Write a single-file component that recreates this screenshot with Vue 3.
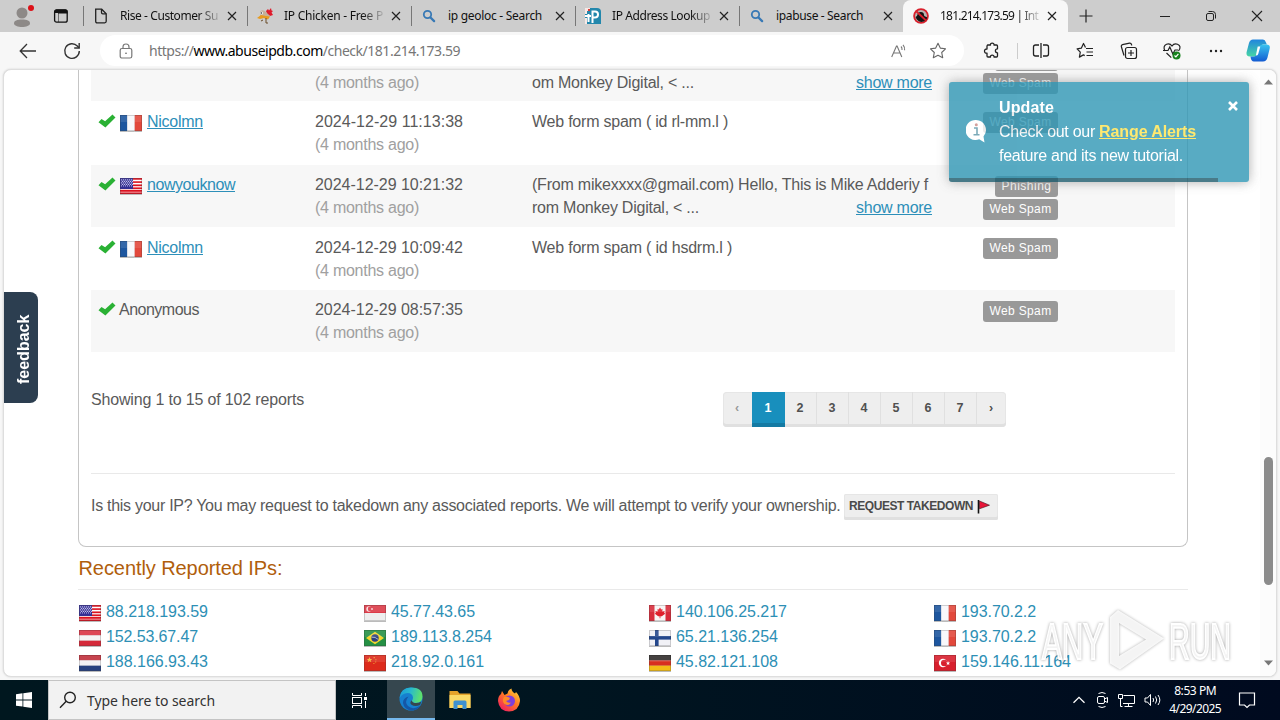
<script setup>
const vFit = {
  mounted(el, { value }) {
    if (!value) return
    const natural = el.getBoundingClientRect().width
    const count = el.textContent.length
    el.style.letterSpacing = `${(value - natural) / count}px`
  }
}

const tabs = [
  { icon: 'page', title: 'Rise - Customer Su', w: 98 },
  { icon: 'chicken', title: 'IP Chicken - Free P', w: 99 },
  { icon: 'search', title: 'ip geoloc - Search', w: 94 },
  { icon: 'ip', title: 'IP Address Lookup', w: 98 },
  { icon: 'search', title: 'ipabuse - Search', w: 87 },
  { icon: 'ban', title: '181.214.173.59 | Int', w: 98, active: true }
]

const reports = [
  { height: 31, partial: true, time: '', lines: [['om Monkey Digital, < ...', 162]], more: true, tags: ['Phishing', 'Web Spam'] },
  { height: 64, pad: 9, user: 'Nicolmn', uw: 56, flag: 'fr', time: '2024-12-29 11:13:38', lines: [['Web form spam ( id rl-mm.l )', 196]], tags: ['Web Spam'] },
  { height: 62, pad: 8, user: 'nowyouknow', uw: 88, flag: 'us', time: '2024-12-29 10:21:32', lines: [['(From mikexxxx@gmail.com) Hello, This is Mike Adderiy f', 396], ['rom Monkey Digital, < ...', 167]], more: true, tags: ['Phishing', 'Web Spam'] },
  { height: 63, pad: 9, user: 'Nicolmn', uw: 56, flag: 'fr', time: '2024-12-29 10:09:42', lines: [['Web form spam ( id hsdrm.l )', 200]], tags: ['Web Spam'] },
  { height: 62, pad: 8, user: 'Anonymous', uw: 80, plain: true, time: '2024-12-29 08:57:35', lines: [], tags: ['Web Spam'] }
]

const ips = [
  ['us', '88.218.193.59', 102], ['sg', '45.77.43.65', 84], ['ca', '140.106.25.217', 111], ['fr', '193.70.2.2', 75],
  ['at', '152.53.67.47', 92], ['br', '189.113.8.254', 101], ['fi', '65.21.136.254', 102], ['fr', '193.70.2.2', 75],
  ['nl', '188.166.93.43', 102], ['cn', '218.92.0.161', 93], ['de', '45.82.121.108', 102], ['tr', '159.146.11.164', 110]
]

const rect = (x, y, w, h, f) => `<rect x="${x}" y="${y}" width="${w}" height="${h}" fill="${f}"/>`
const rows3 = (a, b, c) => rect(0, 0, 22, 5.4, a) + rect(0, 5.4, 22, 5.3, b) + rect(0, 10.7, 22, 5.3, c)
const dots = Array.from({ length: 18 }, (_, i) => rect(1 + (i % 6) * 2, 1.4 + Math.floor(i / 6) * 3, 1, 1, '#c5c3ee')).join('')
const dots2 = Array.from({ length: 12 }, (_, i) => rect(2 + (i % 6) * 2, 2.9 + Math.floor(i / 6) * 3, 1, 1, '#c5c3ee')).join('')
const flags = {
  fr: rect(0, 0, 7.3, 16, '#1d569f') + rect(7.3, 0, 7.4, 16, '#f8f8fb') + rect(14.7, 0, 7.3, 16, '#e2483c'),
  us: rect(0, 0, 22, 16, '#fff') + [0, 3.2, 6.4, 9.4, 12, 14.4].map(y => rect(0, y, 22, 1.8, '#dc1220')).join('') + rect(0, 0, 13, 11, '#352f94') + dots + dots2,
  sg: rect(0, 0, 22, 8, '#dc3a48') + rect(0, 8, 22, 8, '#eeeeee') + '<circle cx="5" cy="4" r="2.7" fill="#fbdfe0"/><circle cx="6.2" cy="4" r="2.4" fill="#dc3a48"/><circle cx="8" cy="4" r="1" fill="#f7c9cc"/>',
  ca: rect(0, 0, 22, 16, '#f8f5f5') + rect(0, 0, 5.5, 16, '#d82c3b') + rect(16.5, 0, 5.5, 16, '#d82c3b') + '<path d="M11 2.6l1.3 2 1.2-.6-.2 2.6 2.4-.5-.5 1.6 1 1-3.4 2.6H9.200L5.800 8.700l1-1-.5-1.600 2.400.5L8.500 4l1.200.6z" fill="#e0202c"/><path d="M10.600 11h.8v2.300h-.8z" fill="#e0202c"/>',
  at: rows3('#db3142', '#f5f2f3', '#d42a3a'),
  nl: rows3('#c02f3c', '#f2f1f4', '#27417f'),
  de: rows3('#302c2b', '#d8301f', '#f3bd16'),
  fi: rect(0, 0, 22, 16, '#f1f1f6') + rect(6, 0, 3.6, 16, '#24478c') + rect(0, 6, 22, 3.6, '#24478c'),
  br: rect(0, 0, 22, 16, '#259044') + '<path d="M11 1.800L20 8l-9 6.200L2 8z" fill="#f3d52d"/><circle cx="11" cy="8" r="3.700" fill="#2d3f7e"/><path d="M7.600 7.200q3.600-.6 6.600 2.200" stroke="#cdd5dd" stroke-width=".8" fill="none"/>',
  cn: rect(0, 0, 22, 16, '#dd2a1b') + '<path d="M5.500 2l.8 2h2L6.700 5.300l.6 2-1.800-1.200-1.800 1.200.6-2L2.700 4h2z" fill="#f6b43a"/><path d="M9.600 2h1.200v1.200H9.600zm1.800 2.200h1v1h-1zm-.2 2.400h1v1h-1zM9.400 8h1v1h-1z" fill="#f0a036"/>',
  tr: rect(0, 0, 22, 16, '#d81f2d') + '<circle cx="9" cy="8" r="4.200" fill="#fff"/><circle cx="10.300" cy="8" r="3.300" fill="#d81f2d"/><path d="M14 6l.6 1.400 1.500.1-1.100 1 .4 1.500-1.400-.8-1.300.8.400-1.500-1.100-1 1.500-.1z" fill="#fff"/>'
}
const gloss = rect(0.5, 0.5, 21, 6.5, 'rgba(255,255,255,.1)') + '<rect x=".5" y=".5" width="21" height="15" fill="none" stroke="rgba(60,60,60,.22)"/>'
const flagArt = code => flags[code] + gloss
</script>

<template>
  <div class="desktop">
    <header class="tabstrip">
      <div class="profile">
        <svg width="26" height="28" viewBox="0 0 26 28">
          <circle cx="10" cy="13" r="5.500" fill="#8d8987" />
          <path d="M2 23.500c0-3 3-4 8-4s8 1 8 4c0 2.300-4 3.500-8 3.500s-8-1.200-8-3.500z" fill="#8d8987" />
          <circle cx="19" cy="8" r="3" fill="#dc1118" />
        </svg>
      </div>
      <svg class="tabmenu" width="16" height="16" viewBox="0 0 16 16">
        <rect x="1.600" y="1.900" width="12.600" height="12.300" rx="2" fill="none" stroke="#111" stroke-width="1.300" />
        <path d="M1.500 4V3q0-1.500 2-1.500h9q2 0 2 1.500v2.500h-9V14H5V5H2z" fill="#111" />
      </svg>
      <div v-for="(t, i) in tabs" :key="i" class="tab" :class="{ active: t.active }">
        <svg class="favicon" width="16" height="16" viewBox="0 0 16 16">
          <g v-if="t.icon === 'page'" fill="none" stroke="#222" stroke-width="1.300">
            <path d="M2.700 1.200h6l4.500 4.500v7.600q0 1.500-1.500 1.500h-7.500q-1.500 0-1.500-1.500z" /><path d="M8.500 1.200v3.300q0 1.300 1.300 1.300h3.300" />
          </g>
          <g v-else-if="t.icon === 'chicken'">
            <path d="M9 3l2-2 1 1.500L14 0l.5 2.500L16 3l-1.500 1.500L16 7l-3 1-3-2z" fill="#df1b2b" />
            <path d="M3 3.500Q6 1 9 4l4 4q-1 3-4 3.500L6 9 3 8z" fill="#c5b19b" />
            <path d="M0 10l4-3 5 1 4 .5-2 3-4-1.500-4 1z" fill="#e79b20" /><path d="M9 10v5h2M6 12l-2 1" stroke="#6b4c28" fill="none" />
            <circle cx="4.500" cy="5" r="1.500" fill="#eee" /><circle cx="4.300" cy="5" r=".7" fill="#222" />
          </g>
          <g v-else-if="t.icon === 'search'" fill="none" stroke="#3879b5">
            <circle cx="6.500" cy="6.500" r="3.700" stroke-width="1.800" /><path d="M9.500 9.500l3.600 3.600" stroke-width="2.300" stroke-linecap="round" />
          </g>
          <g v-else-if="t.icon === 'ip'">
            <path d="M0 0h12q4 0 4 4v12H0z" fill="#2387ac" /><path d="M0 0h5v3H2v3H0zM0 10h2v6H0z" fill="#f8e8e5" />
            <path d="M3.500 6v8M7.500 15V3.500H10q3 0 3 3t-3 3H7.500M0 8h6" fill="none" stroke="#fff" stroke-width="2" /><path d="M3 1h2v2H3z" fill="#dc3c37" />
          </g>
          <g v-else>
            <circle cx="8" cy="8" r="7.800" fill="#d9202c" /><circle cx="8" cy="8" r="6" fill="#b9b4b2" />
            <path d="M2.500 9q2-1 2.500-4 3-2 5.500 0l.8 3 3 1.500q-1 4-6 4.500-4-.5-5.800-5z" fill="#151313" /><path d="M3.500 3.500l9.500 9" stroke="#d9202c" stroke-width="1.800" />
          </g>
        </svg>
        <div class="tabtitle" :class="{ fade: t.w > 95 }"><span v-fit="t.w">{{ t.title }}</span></div>
        <svg class="tabclose" width="10" height="10" viewBox="0 0 10 10"><path d="M1 1l8 8M9 1L1 9" stroke="#222" stroke-width="1.200" /></svg>
      </div>
      <svg class="newtab" width="14" height="14" viewBox="0 0 14 14"><path d="M7 .5v13M.5 7h13" stroke="#222" stroke-width="1.200" /></svg>
      <div class="winbtns">
        <svg width="12" height="12" viewBox="0 0 12 12"><path d="M1 6.500h10" stroke="#222" /></svg>
        <svg width="12" height="12" viewBox="0 0 12 12" fill="none" stroke="#222"><rect x="1.500" y="3.500" width="7" height="7" rx="1.500" /><path d="M3.500 1.500h4q3 0 3 3v4" /></svg>
        <svg width="12" height="12" viewBox="0 0 12 12"><path d="M1 1l10 10M11 1L1 11" stroke="#222" stroke-width="1.100" /></svg>
      </div>
    </header>

    <div class="toolbar">
      <svg class="back" width="18" height="16" viewBox="0 0 18 16" fill="none" stroke="#333" stroke-width="1.300"><path d="M17 8H1.500M8 1L1.200 8 8 15" /></svg>
      <svg class="reload" width="18" height="18" viewBox="0 0 18 18" fill="none" stroke="#333" stroke-width="1.400"><path d="M16.300 9a7.300 7.300 0 1 1-2-5l1.700 1.800" /><path d="M16.200 1v5h-5" /></svg>
      <div class="address">
        <svg class="lock" width="14" height="16" viewBox="0 0 14 16" fill="none" stroke="#777" stroke-width="1.200"><rect x="1.200" y="5.500" width="11.600" height="9.500" rx="1.800" /><path d="M4 5.500V4q0-3 3-3t3 3v1.500" /><circle cx="7" cy="10.200" r=".8" fill="#555" stroke="none" /></svg>
        <span v-fit="311" class="url">https://<b>www.abuseipdb.com</b>/check/181.214.173.59</span>
        <svg class="read" width="16" height="16" viewBox="0 0 16 16" fill="none" stroke="#777" stroke-width="1.100"><path d="M.7 14L5.500 3h.6l4.700 11M2.500 10h6.600M10 3.500q1.300 1.300 1 3.500M12 1.800q2 2.200 1.600 5.500" /></svg>
        <svg class="star" width="18" height="17" viewBox="0 0 18 17" fill="none" stroke="#666" stroke-width="1.100" stroke-linejoin="round"><path d="M9 1.200l2.300 4.900 5.200.7-3.800 3.700 1 5.200L9 13.200l-4.700 2.500 1-5.200L1.500 6.800l5.200-.7z" /></svg>
      </div>
      <div class="tools">
        <svg width="18" height="18" viewBox="0 0 18 18" fill="none" stroke="#222" stroke-width="1.300" stroke-linejoin="round"><path d="M4.500 3h3q-.3-1.900 1.700-1.900T11 3h2.500q1 0 1 1v2.800q-2.100 0-2.100 2t2.100 2V14q0 1-1 1H11q.1-1.900-1.800-1.900T7.500 15h-2.500q-1 0-1-1v-2.900q-2.500.2-2.500-2T4 7V4z" /></svg>
        <i class="divider"></i>
        <svg width="18" height="18" viewBox="0 0 18 18" fill="none" stroke="#222" stroke-width="1.300"><path d="M7 3H3.500Q1.500 3 1.500 5v7q0 2 2 2H7M11 3h3.500q2 0 2 2v7q0 2-2 2H11M9 1v15" /></svg>
        <svg width="18" height="18" viewBox="0 0 18 18" fill="none" stroke="#222" stroke-width="1.200" stroke-linejoin="round"><path d="M9.500 5.500L7.500 1.500 5.300 6.200l-4.200.6 3.200 3.300-.9 5 4-2.200 1.300.7M10 6.500h7M10.500 10H17M10.500 13.500H17" /></svg>
        <svg width="18" height="18" viewBox="0 0 18 18" fill="none" stroke="#222" stroke-width="1.200"><rect x="5.500" y="5.500" width="11" height="11" rx="2" /><path d="M11 8v6M8 11h6M4 13.500L1.300 4.500Q1 3 2.500 2.600l7-1.500q1.600-.2 2 1.400l.2 1" /></svg>
        <svg width="19" height="18" viewBox="0 0 19 18" fill="none" stroke="#222" stroke-width="1.200"><path d="M2 9Q-.5 4 3.500 2.200 7 1 9 4q2-3 5.500-1.800Q19 4 15.500 9M3.500 11l4.800 4.600M0 8.500h5L6.800 5l3 7L12 8h3" /><circle cx="13.500" cy="13.500" r="4" fill="#16821c" stroke="none" /><path d="M11.500 13.500l1.400 1.400 2.500-3" stroke="#fff" /></svg>
        <svg width="18" height="18" viewBox="0 0 18 18" fill="#222"><circle cx="3" cy="9" r="1.200" /><circle cx="8" cy="9" r="1.200" /><circle cx="13" cy="9" r="1.200" /></svg>
        <svg class="copilot" width="24" height="23" viewBox="0 0 24 23">
          <defs><linearGradient id="cpa" x1="0" y1="0" x2="0" y2="1"><stop stop-color="#2185de" /><stop offset="1" stop-color="#46d6a5" /></linearGradient><linearGradient id="cpb" x1="0" y1="0" x2="0" y2="1"><stop stop-color="#39c4ef" /><stop offset="1" stop-color="#135bd2" /></linearGradient></defs>
          <path d="M7 .5h10q2 0 3 3l.8 2H17q-2 0-3 3l-2 6q-1 3-4 3H4q-4 0-3.500-4L3 4Q4 .5 7 .5z" fill="url(#cpa)" />
          <path d="M17 5.500h3.500q4 0 3.200 4l-2.200 9q-1 4-4.500 4H8q-3 0-3.500-5H8q2 0 3-3l2-6q1-3 4-3z" fill="url(#cpb)" />
          <path d="M11.700 7.500h2.600L12.200 15q-.5 1.500-2.300 1.500z" fill="#fff" />
        </svg>
      </div>
    </div>

    <main class="viewport">
      <div class="page">
        <section class="card">
          <div v-for="(r, i) in reports" :key="i" class="row" :class="{ odd: i % 2 === 0, partial: r.partial }" :style="{ height: r.height + 'px', paddingTop: (r.pad || 0) + 'px' }">
            <div class="who">
              <template v-if="r.user">
                <svg class="check" width="18" height="14" viewBox="0 0 18 14"><path d="M.5 8.200l3-3.200 3.600 2.300L14.500.6l3 2.900L7.400 13.400z" fill="#2ab134" /></svg>
                <svg v-if="r.flag" class="flag" width="22" height="16" viewBox="0 0 22 16" v-html="flagArt(r.flag)"></svg>
                <span v-fit="r.uw" :class="r.plain ? 'plain' : 'link'">{{ r.user }}</span>
              </template>
            </div>
            <div class="when">
              <div v-if="r.time"><span v-fit="148">{{ r.time }}</span></div>
              <div class="ago"><span v-fit="104">(4 months ago)</span></div>
            </div>
            <div class="comment">
              <div v-for="(l, k) in r.lines" :key="k" class="cline">
                <span v-fit="l[1]">{{ l[0] }}</span>
                <span v-if="r.more && k === r.lines.length - 1" v-fit="76" class="link">show more</span>
              </div>
            </div>
            <div class="tags" :class="{ raised: r.pad === 9 }">
              <div v-for="t in r.tags" :key="t" class="tag"><span v-fit="t === 'Phishing' ? 50 : 62">{{ t }}</span></div>
            </div>
          </div>
          <div class="summary">
            <span v-fit="213" class="showing">Showing 1 to 15 of 102 reports</span>
            <div class="pager">
              <span class="pg dim">‹</span>
              <span class="pg on">1</span>
              <span v-for="n in 6" :key="n" class="pg">{{ n + 1 }}</span>
              <span class="pg last">›</span>
            </div>
          </div>
          <div class="takedown">
            <span v-fit="749.5">Is this your IP? You may request to takedown any associated reports. We will attempt to verify your ownership.</span>
            <div class="request">
              <span v-fit="124">REQUEST TAKEDOWN</span>
              <svg width="14" height="15" viewBox="0 0 14 15"><path d="M1.500 1v13.500" stroke="#111" stroke-width="1.600" /><path d="M2.500 2l10 4.200-10 3.600z" fill="#e81538" stroke="#3b1018" stroke-width=".6" /></svg>
            </div>
          </div>
        </section>
        <h3 class="heading"><span v-fit="204">Recently Reported IPs:</span></h3>
        <div class="ips">
          <div v-for="(p, i) in ips" :key="i" class="ip">
            <svg class="flag" width="22" height="16" viewBox="0 0 22 16" v-html="flagArt(p[0])"></svg>
            <span v-fit="p[2]">{{ p[1] }}</span>
          </div>
        </div>
      </div>
      <div class="scroll">
        <svg width="9" height="6" viewBox="0 0 9 6"><path d="M0 5.500L4.500.5 9 5.500z" fill="#777" /></svg>
        <div class="thumb"></div>
        <svg class="down" width="9" height="6" viewBox="0 0 9 6"><path d="M0 .5L4.500 5.500 9 .5z" fill="#777" /></svg>
      </div>
      <div class="feedback">feedback</div>
      <div class="toast">
        <svg class="info" width="21" height="26" viewBox="0 0 21 26"><path d="M10 1a10 10 0 0 1 7.500 16.500l1 6-5.300-3.200A10 10 0 1 1 10 1z" fill="#fff" /><circle cx="10.300" cy="5.800" r="1.500" fill="#c98983" /><path d="M8 9h3v6.500M7.500 15.800h6" stroke="#5b96a8" stroke-width="1.600" fill="none" /></svg>
        <div class="tmsg">
          <div><b v-fit="55">Update</b></div>
          <div><span v-fit="96" class="pre">Check out our</span><b v-fit="97" class="alerts">Range Alerts</b></div>
          <div><span v-fit="184">feature and its new tutorial.</span></div>
        </div>
        <svg class="tclose" width="10" height="10" viewBox="0 0 10 10"><path d="M1 1l8 8M9 1L1 9" stroke="#fff" stroke-width="2.600" /></svg>
        <div class="progress"></div>
      </div>
    </main>

    <svg class="watermark" width="204" height="68" viewBox="0 0 204 68">
      <g fill="#fff" fill-opacity=".85" stroke="#fff" stroke-width="2">
        <text x="4" y="53" textLength="61" lengthAdjust="spacingAndGlyphs">ANY</text>
        <text x="131" y="53" textLength="62" lengthAdjust="spacingAndGlyphs">RUN</text>
        <path stroke="none" fill-rule="evenodd" d="M72 11l8-7 46 28.500-44 31-10-6zm9 6v33l27-16.500z" />
      </g>
    </svg>

    <footer class="taskbar">
      <div class="start"><svg width="16" height="16" viewBox="0 0 16 16" fill="#fff"><path d="M0 2.200l6.500-.9v6.200H0zM7.300 1.200L16 0v7.500H7.300zM0 8.400h6.500v6.200L0 13.700zM7.300 8.400H16V16l-8.700-1.200z" /></svg></div>
      <div class="search">
        <svg width="18" height="18" viewBox="0 0 18 18" fill="none" stroke="#222" stroke-width="1.400"><circle cx="11" cy="6.500" r="5.300" /><path d="M7.200 10.300L1 16.700" /></svg>
        <span v-fit="128">Type here to search</span>
      </div>
      <div class="app"><svg width="18" height="17" viewBox="0 0 18 17" fill="none" stroke="#fff"><path d="M1.500 1v2.500h9V1M1.500 16v-2.500h9V16" /><rect x="1.500" y="5.500" width="9" height="6" /><path d="M14.500 1v3M14.500 9v7" /><path d="M13 5h3v3h-3z" fill="#fff" stroke="none" /></svg></div>
      <div class="app on">
        <svg width="24" height="24" viewBox="0 0 24 24">
          <defs><linearGradient id="edge" x1="0" y1="0" x2="1" y2=".2"><stop stop-color="#199ad9" /><stop offset=".5" stop-color="#29b9cd" /><stop offset="1" stop-color="#5ce06f" /></linearGradient></defs>
          <circle cx="12" cy="12" r="11.500" fill="#1680cf" />
          <path d="M.6 11Q1.500.5 12 .5 23.500.5 23.500 9.500q0 6.500-6.500 6.500-4 0-4-2.500 1-1 1-3Q13.500 6 8.500 6 3 6.500.6 11z" fill="url(#edge)" />
          <path d="M9.500 9.500Q5 15 9 19q5 4.500 12.500-.5-3 5-9 5Q5 22.500 4 16q-.2-5 5.500-6.500z" fill="#1557a6" />
          <path d="M12.800 13.200Q13 16 17 16q3 0 5.500-1.500L21 18q-5 2-8.500-.3-2.500-2 .3-4.500z" fill="#36474f" />
        </svg>
      </div>
      <div class="app"><svg width="22" height="20" viewBox="0 0 22 20"><path d="M.5 1h8l2 2.500h11V18H.5z" fill="#e6a32a" /><path d="M.5 5h21v13H.5z" fill="#fbd966" /><path d="M4.500 19v-7q0-1.500 1.500-1.500h10q1.500 0 1.500 1.500v7h-4v-4h-5v4z" fill="#3f92d0" /></svg></div>
      <div class="app">
        <svg width="24" height="24" viewBox="0 0 24 24">
          <defs><linearGradient id="ff" x1="1" y1="0" x2=".2" y2="1"><stop stop-color="#ffe53b" /><stop offset=".5" stop-color="#ff7824" /><stop offset="1" stop-color="#ef1b62" /></linearGradient></defs>
          <path d="M5 3l2.500 4 3-1.500Q11 2 14.500.5q0 3 3.500 5l1-1.500q4 4 4 9Q22 23 12 23.500 2 23 1 13q0-5 3-7z" fill="url(#ff)" />
          <circle cx="12.500" cy="13" r="5.500" fill="#7d3fda" /><path d="M7 9q3-1 6 1l-1 2-3 1q2 2.500 5 1.500-2 4-6.500 1.500Q4.500 13 7 9z" fill="#ff8a26" />
        </svg>
      </div>
      <div class="tray">
        <svg width="14" height="14" viewBox="0 0 14 14" fill="none" stroke="#fff" stroke-width="1.300"><path d="M1.500 9.800L7 4.300l5.500 5.500" /></svg>
        <svg width="13" height="18" viewBox="0 0 13 18" fill="none" stroke="#fff"><rect x="2.500" y="5.500" width="7" height="7" rx="1.500" /><path d="M9.500 8l3-1.500v5L9.500 10M3.500 2.500q3.500-2 7 0M3.500 15.500q3.500 2 7 0" /></svg>
        <svg width="17" height="15" viewBox="0 0 17 15" fill="none" stroke="#fff"><path d="M5.500 2.500h11v8H5M10.500 10.500v3M6.500 13.500h8M.5 1.500h4v4h-4zM2.500 5.500v8h2" /></svg>
        <svg width="18" height="14" viewBox="0 0 18 14" fill="none" stroke="#fff"><path d="M1 5h2.500l3-3.500v11L3.500 9H1zM9 5q1.200 2 0 4M11.500 3.500q2.400 3.500 0 7M14 2q3.700 5 0 10" /></svg>
        <div class="clock"><div><span v-fit="42">8:53 PM</span></div><div><span v-fit="52">4/29/2025</span></div></div>
        <svg class="note" width="18" height="18" viewBox="0 0 18 18" fill="none" stroke="#fff" stroke-width="1.200"><path d="M1.500 2h15v12h-5L9 16.500 6.500 14h-5z" /></svg>
      </div>
    </footer>
  </div>
</template>

<style>
html, body { margin: 0; overflow: hidden; }
</style>

<style scoped>
* { box-sizing: border-box; }
svg { display: block; flex: none; }
span, b { white-space: nowrap; }
.desktop { position: relative; width: 1280px; height: 720px; overflow: hidden; display: flex; flex-direction: column; background: #f7f7f7; font-family: "Liberation Sans", Arial, sans-serif; }
.tabstrip { height: 32px; flex: none; display: flex; align-items: center; background: #cdcdcd; font: 12px "Noto Sans", sans-serif; color: #111; }
.profile { width: 53px; height: 32px; padding-left: 12px; }
.tabmenu { margin-right: 14px; }
.tab { width: 164px; height: 32px; display: flex; align-items: center; padding-left: 10px; position: relative; }
.tab::before { content: ""; position: absolute; left: 0; top: 6px; width: 1px; height: 20px; background: #777; }
.tab.active { background: #f7f7f7; border-radius: 8px 8px 0 0; width: 165px; }
.tab.active::before { display: none; }
.tabtitle { width: 100px; margin-left: 11px; overflow: hidden; line-height: 18px; }
.tabtitle span, .url, .showing, .takedown > span, .who span { display: inline-block; }
.tabtitle.fade { -webkit-mask-image: linear-gradient(90deg, #000 78%, transparent 103%); mask-image: linear-gradient(90deg, #000 78%, transparent 103%); }
.tabclose { margin-left: 7px; }
.newtab { margin-left: 11px; }
.winbtns { margin-left: auto; display: flex; gap: 34px; margin-right: 17px; }
.toolbar { height: 37px; flex: none; display: flex; align-items: center; background: #f7f7f7; padding-left: 19px; }
.reload { margin-left: 26px; }
.address { margin-left: 19px; width: 864px; height: 31px; border-radius: 16px; background: #fff; display: flex; align-items: center; padding-left: 19px; }
.url { margin-left: 16px; font: 14px "Noto Sans", sans-serif; color: #767676; }
.url b { font-weight: 400; color: #000; }
.read { margin-left: auto; }
.star { margin: 0 17px 0 22px; }
.tools { flex: 1; display: flex; align-items: center; padding-left: 19px; gap: 25.7px; }
.divider { width: 1px; height: 16px; background: #ccc; margin: 0 -11px 0 -10px; }
.copilot { margin-left: -6px; }
.viewport { position: relative; height: 608px; flex: none; margin: 0 3px; background: #fff; border: 1px solid #dedede; border-radius: 8px; overflow: hidden; box-shadow: 0 0 2px #ccc; display: flex; color: #5a5a5a; font-size: 16px; line-height: 23px; }
.page { margin-left: 74px; width: 1110px; flex: none; }
.card { height: 477px; border: 1px solid #c5c5c5; border-top: 0; border-radius: 0 0 8px 8px; padding: 0 12px; }
.row { display: flex; overflow: hidden; padding-left: 8px; }
.row.odd { background: #f7f7f7; }
.row.partial { align-items: flex-end; padding-bottom: 7px; }
.who { width: 216px; display: flex; }
.check { margin: 4px 2px 0 -1px; }
.who .flag { margin: 5px 5px 0 2px; }
.who .plain { margin-left: 1px; }
.link { color: #2d8fb9; text-decoration: underline; text-underline-offset: 1px; }
.when { width: 217px; }
.ago { color: #a0a0a0; }
.when span, .cline span, .tag span, .request span, .heading span, .ip span, .clock span, .search span { display: inline-block; }
.comment { width: 400px; }
.cline { display: flex; justify-content: space-between; }
.tags { width: 126px; display: flex; flex-direction: column; align-items: flex-end; gap: 2px; padding-top: 3px; }
.tags.raised { padding-top: 2px; }
.partial .tags { margin-bottom: 0; }
.tag { height: 21px; border-radius: 3px; background: #999; color: #fff; font-size: 12px; line-height: 20px; padding: 0 6.5px; flex: none; }
.summary { height: 122px; border-bottom: 1px solid #e9e9e9; display: flex; align-items: flex-start; padding-top: 40px; }
.showing { margin-top: -4px; }
.pager { margin-left: auto; margin-right: 169px; height: 35px; display: flex; background: #eee; border-radius: 4px; box-shadow: inset 0 -3px #e0e0e0, inset 0 0 0 1px #e6e6e6; font-size: 12.5px; font-weight: 700; color: #505050; line-height: 32px; text-align: center; }
.pg { width: 32px; padding-right: 1px; border-right: 1px solid #e0e0e0; }
.pg.dim { width: 29px; color: #999; border: 0; }
.pg.on { width: 33px; background: #188fbd; color: #fff; border: 0; box-shadow: inset 0 -4px #147aa3; }
.pg.last { width: 29px; border: 0; }
.takedown { display: flex; padding-top: 20px; }
.request { height: 26px; margin-left: 3.5px; display: flex; padding: 0 6px 0 5px; gap: 4px; width: 154px; background: #eee; border-radius: 2px; box-shadow: inset 0 -3px #e0e0e0, inset 0 0 0 1px #e6e6e6; font-size: 12px; font-weight: 700; line-height: 25px; color: #4a4a4a; }
.request svg { margin-top: 5px; }
.showing, .takedown > span { flex: none; }
.heading { margin: 0; height: 43px; border-bottom: 1px solid #e9e9e9; color: #b05e0c; font-weight: 400; font-size: 20px; line-height: 42px; padding-left: .5px; }
.ips { display: grid; grid-template-columns: repeat(4, 285px); grid-auto-rows: 25.2px; padding-top: 9px; color: #2d8fb5; }
.ip { display: flex; line-height: 25px; }
.ip .flag { margin: 6px 5px 0 1px; }
.flag { filter: drop-shadow(0 1px 0 #bbb); }
.scroll { margin-left: auto; width: 16px; background: #fcfcfc; display: flex; flex-direction: column; align-items: center; padding-top: 9px; }
.thumb { margin-top: 372px; width: 9px; height: 128px; border-radius: 5px; background: #8b8b8b; flex: none; }
.down { margin-top: 75px; }
.feedback { position: absolute; left: 0; top: 222px; width: 34px; height: 111px; background: #2c3e50; border-radius: 8px 0 0 8px; color: #fff; font-size: 16px; font-weight: 700; writing-mode: vertical-rl; transform: rotate(180deg); text-align: center; line-height: 27px; padding: 0 6px 4px 0; }
.toast { position: absolute; left: 945px; top: 12px; width: 300px; height: 100px; border-radius: 3px; background: #2f96b4; opacity: .8; box-shadow: 0 0 12px #999; color: #fff; line-height: 24px; overflow: hidden; padding: 14px 0 0 50px; }
.tmsg b, .tmsg span { display: inline-block; }
.tmsg .pre { margin-right: 4px; }
.tmsg .alerts { color: #ffe44c; text-decoration: underline; }
.info { position: absolute; left: 17px; top: 37px; }
.tclose { position: absolute; right: 11px; top: 19px; }
.progress { position: absolute; left: 0; bottom: 0; height: 4px; width: 269px; background: #000; opacity: .4; }
.watermark { position: absolute; left: 1038px; top: 606px; filter: drop-shadow(0 0 1.500px rgba(0, 0, 0, .36)); font: 50px "Liberation Sans", Arial, sans-serif; }
.taskbar { margin-top: 3px; height: 40px; flex: none; display: flex; background: linear-gradient(90deg, #00171f, #001520 45%, #000a1f); color: #fff; font-family: "Noto Sans", sans-serif; }
.start { width: 48px; display: flex; align-items: center; justify-content: center; }
.search { width: 288px; background: #f2f2f2; border: 1px solid #c4c4c4; display: flex; align-items: center; padding-left: 10px; gap: 10px; color: #333; font-size: 14px; }
.app { width: 49px; display: flex; align-items: center; justify-content: center; }
.search + .app { width: 51px; padding-right: 3px; }
.app.on { width: 48px; background: #36474f; border-bottom: 2px solid #76b9ed; }
.tray { margin-left: auto; display: flex; align-items: center; width: 208px; gap: 9.300px; }
.clock { width: 66px; margin-left: -9px; text-align: center; font-size: 12px; line-height: 18px; }
.note { margin-left: 1px; }
</style>
